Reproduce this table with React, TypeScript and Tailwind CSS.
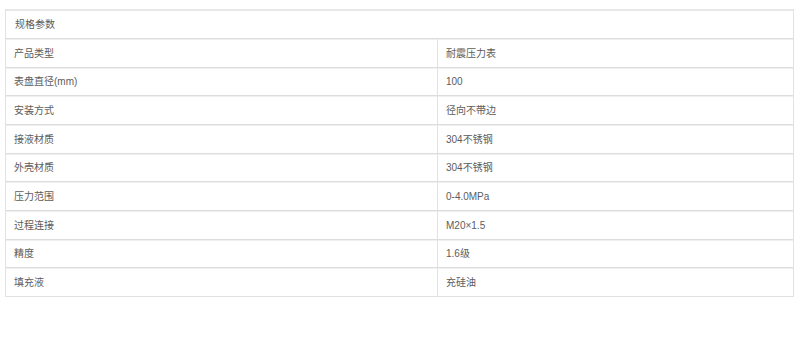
import React from "react";

const rows: [string, string][] = [
  ["产品类型", "耐震压力表"],
  ["表盘直径(mm)", "100"],
  ["安装方式", "径向不带边"],
  ["接液材质", "304不锈钢"],
  ["外壳材质", "304不锈钢"],
  ["压力范围", "0-4.0MPa"],
  ["过程连接", "M20×1.5"],
  ["精度", "1.6级"],
  ["填充液", "充硅油"],
];

export default function App() {
  return (
    <div
      className="w-[800px] h-[339px] bg-white pt-[9px] pl-[5px]"
      style={{ fontFamily: '"Liberation Sans", "Noto Sans CJK SC", sans-serif' }}
    >
      <div className="w-[789px] border-l border-r border-[#e2e2e2] border-b text-[10px] text-[#5c5c5c]">
        <div className="h-[29px] border-t-2 border-[#e8e8e8] flex items-center pl-[9px]">规格参数</div>
        {rows.map(([k, v], i) => (
          <div
            key={i}
            className={`flex border-t border-[#dddddd] shadow-[inset_0_1px_0_#f0f0f0] ${i % 3 === 1 ? "h-[28px]" : "h-[29px]"}`}
          >
            <div className="w-[432px] border-r border-[#e2e2e2] flex items-center pl-[8px]">{k}</div>
            <div className="flex-1 flex items-center pl-[8px]">{v}</div>
          </div>
        ))}
      </div>
    </div>
  );
}
